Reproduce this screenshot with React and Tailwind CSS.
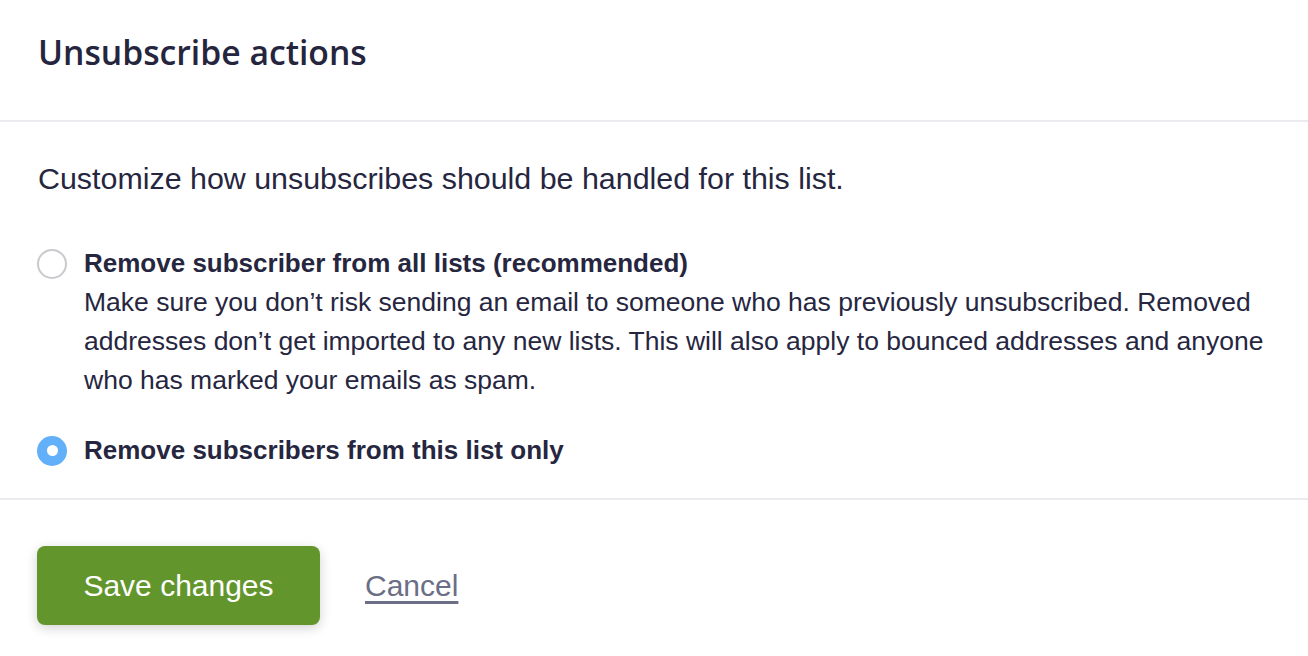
const Radio = ({ checked }) =>
  checked ? (
    <span className="mt-[4.5px] flex h-[30px] w-[30px] shrink-0 items-center justify-center rounded-full bg-[#62b0f9]">
      <span className="h-[11px] w-[11px] rounded-full bg-white" />
    </span>
  ) : (
    <span className="mt-[4.5px] h-[30px] w-[30px] shrink-0 rounded-full border-2 border-[#c9c9ce] bg-white" />
  );

export default function App() {
  const options = [
    {
      title: "Remove subscriber from all lists (recommended)",
      description:
        "Make sure you don’t risk sending an email to someone who has previously unsubscribed. Removed addresses don’t get imported to any new lists. This will also apply to bounced addresses and anyone who has marked your emails as spam.",
      checked: false,
    },
    {
      title: "Remove subscribers from this list only",
      checked: true,
    },
  ];

  return (
    <div className="min-h-screen bg-white text-[#26263f] font-['Liberation_Sans',Arial,sans-serif]">
      <div className="h-[122px] border-b-2 border-[#ebebef] px-[38px] pt-[31px]">
        <h1 className="font-['Open_Sans',sans-serif] text-[33.7px] font-semibold leading-[42px] text-[#25253e]">
          Unsubscribe actions
        </h1>
      </div>

      <div className="border-b-2 border-[#ebebef] px-[38px] pb-[28px] pt-[38px]">
        <p className="text-[30.4px] leading-[36px]">
          Customize how unsubscribes should be handled for this list.
        </p>

        <div className="mt-[48px] flex flex-col gap-[31px]">
          {options.map((opt) => (
            <label key={opt.title} className="-ml-px flex gap-[17px]">
              <Radio checked={opt.checked} />
              <div className="max-w-[1192px] text-[26px] leading-[39px]">
                <div className="font-bold">{opt.title}</div>
                {opt.description && <p className="text-[26.5px]">{opt.description}</p>}
              </div>
            </label>
          ))}
        </div>
      </div>

      <div className="flex items-center gap-[45px] px-[37px] pt-[46px]">
        <button className="h-[79px] w-[283px] rounded-[8px] bg-[#62962d] text-[30px] text-white shadow-[0_3px_12px_rgba(0,0,0,0.18)]">
          Save changes
        </button>
        <a href="#" className="text-[30px] text-[#6b6e85] underline underline-offset-[5px]">
          Cancel
        </a>
      </div>
    </div>
  );
}
